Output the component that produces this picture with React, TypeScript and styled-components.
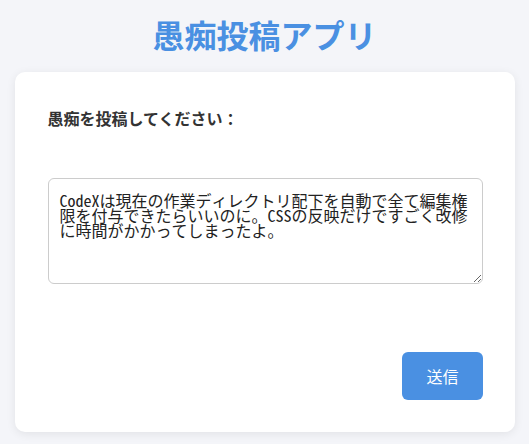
import { useState } from "react";
import { styled, createGlobalStyle } from "styled-components";

const GlobalStyle = createGlobalStyle`
  body {
    margin: 0;
    background-color: #f4f5f9;
    font-family: "Noto Sans CJK JP", "Noto Sans", sans-serif;
  }
`;

const Page = styled.div`
  padding: 11px 14px 20px;
`;

const Title = styled.h1`
  margin: 0 0 15px;
  text-align: center;
  font-size: 32px;
  line-height: 46px;
  font-weight: 700;
  color: #4a90e2;
`;

const Card = styled.form`
  max-width: 500px;
  margin: 0 auto;
  box-sizing: border-box;
  background-color: #fff;
  border-radius: 10px;
  padding: 32px 32px 32px 33px;
  box-shadow: 0 2px 10px rgba(0, 0, 0, 0.08);
  display: flex;
  flex-direction: column;
`;

const Label = styled.label`
  margin-top: 2px;
  font-size: 16px;
  line-height: 24px;
  font-weight: 700;
  color: #333;
`;

const TextArea = styled.textarea`
  margin-top: 48px;
  height: 106px;
  box-sizing: border-box;
  padding: 14px 11px;
  border: 1px solid #ccc;
  border-radius: 6px;
  font-family: "Noto Sans Mono CJK JP", "Noto Sans CJK JP", monospace;
  font-size: 16px;
  line-height: 15px;
  color: #222;
`;

const Actions = styled.div`
  margin-top: 68px;
  display: flex;
  justify-content: flex-end;
`;

const SubmitButton = styled.button`
  padding: 12px 24px;
  border: none;
  border-radius: 6px;
  background-color: #4a90e2;
  color: #fff;
  font-family: "Noto Sans CJK JP", sans-serif;
  font-size: 16px;
  line-height: 24px;
  cursor: pointer;
`;

function App() {
  const [text, setText] = useState(
    "CodeXは現在の作業ディレクトリ配下を自動で全て編集権限を付与できたらいいのに。CSSの反映だけですごく改修に時間がかかってしまったよ。"
  );

  return (
    <>
      <GlobalStyle />
      <Page>
        <Title>愚痴投稿アプリ</Title>
        <Card onSubmit={(e) => e.preventDefault()}>
          <Label htmlFor="complaint">愚痴を投稿してください：</Label>
          <TextArea
            id="complaint"
            value={text}
            onChange={(e) => setText(e.target.value)}
          />
          <Actions>
            <SubmitButton type="submit">送信</SubmitButton>
          </Actions>
        </Card>
      </Page>
    </>
  );
}

export default App;
